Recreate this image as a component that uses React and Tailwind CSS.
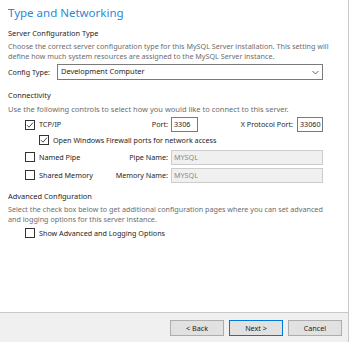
import React from "react";

const font = { fontFamily: '"Noto Sans", "Open Sans", sans-serif' };

function Check({ checked }) {
  return (
    <span className="inline-flex h-[10px] w-[10px] shrink-0 items-center justify-center border border-[#333333] bg-white">
      {checked && (
        <svg width="8" height="8" viewBox="0 0 8 8">
          <path d="M1 4.2 L3 6.2 L7 1.6" fill="none" stroke="#333333" strokeWidth="0.9" />
        </svg>
      )}
    </span>
  );
}

function Field({ value, disabled, className }) {
  return (
    <div
      className={
        "flex h-[15px] shrink-0 items-center border px-[2px] text-[7.2px] " +
        (disabled ? "border-[#cccccc] bg-[#f0f0f0] text-[#8a8a8a] " : "border-[#7a7a7a] bg-white text-[#1e1e1e] ") +
        className
      }
    >
      {value}
    </div>
  );
}

function Button({ label, primary }) {
  return (
    <div
      className={
        "flex h-[16px] w-[54px] items-center justify-center border bg-[#e1e1e1] text-[7.2px] text-[#1e1e1e] " +
        (primary ? "border-[#0078d7]" : "border-[#adadad]")
      }
    >
      {label}
    </div>
  );
}

export default function App() {
  return (
    <div className="flex h-[342px] w-[350px] flex-col overflow-hidden bg-white text-[#1e1e1e]" style={font}>
      <div className="flex w-[349px] flex-1 flex-col border-r border-[#c8c8c8] pl-[8px] pr-[10px]">
        <div className="mt-[4px] h-[18px] text-[11.5px] leading-[18px] text-[#2b88d8]">Type and Networking</div>

        <div className="mt-[6px] text-[7.4px] leading-[10px]">Server Configuration Type</div>
        <div className="mt-[3px] whitespace-nowrap text-[7.2px] leading-[10px] text-[#6d6d6d]">
          Choose the correct server configuration type for this MySQL Server installation. This setting will
          <br />
          define how much system resources are assigned to the MySQL Server instance.
        </div>

        <div className="mt-[3px] flex items-center">
          <span className="w-[49px] text-[7.2px]">Config Type:</span>
          <div className="flex h-[16px] w-[266px] items-center justify-between border border-[#7a7a7a] bg-white pl-[3px] pr-[3px] text-[7.4px]">
            <span>Development Computer</span>
            <svg width="7" height="5" viewBox="0 0 7 5">
              <path d="M0.5 1 L3.5 4 L6.5 1" fill="none" stroke="#555555" strokeWidth="0.9" />
            </svg>
          </div>
        </div>

        <div className="mt-[10px] text-[7.4px] leading-[10px]">Connectivity</div>
        <div className="mt-[4px] whitespace-nowrap text-[7.5px] leading-[10px] text-[#6d6d6d]">
          Use the following controls to select how you would like to connect to this server.
        </div>

        <div className="ml-[17px] mt-[3px] flex items-center whitespace-nowrap text-[7.2px]">
          <Check checked />
          <span className="ml-[4px] w-[100px]">TCP/IP</span>
          <span className="w-[29px] text-right">Port:</span>
          <Field value="3306" className="ml-[3px] w-[27px]" />
          <span className="ml-[25px] w-[70px] text-right">X Protocol Port:</span>
          <Field value="33060" className="ml-[4px] w-[26px]" />
        </div>

        <div className="ml-[31px] mt-[3px] flex items-center whitespace-nowrap text-[7.2px]">
          <Check checked />
          <span className="ml-[4px]">Open Windows Firewall ports for network access</span>
        </div>

        <div className="ml-[17px] mt-[4px] flex items-center whitespace-nowrap text-[7.2px]">
          <Check />
          <span className="ml-[4px] w-[72px]">Named Pipe</span>
          <span className="w-[57px] text-right">Pipe Name:</span>
          <Field value="MYSQL" disabled className="ml-[3px] w-[152px]" />
        </div>

        <div className="ml-[17px] mt-[3px] flex items-center whitespace-nowrap text-[7.2px]">
          <Check />
          <span className="ml-[4px] w-[72px]">Shared Memory</span>
          <span className="w-[57px] text-right">Memory Name:</span>
          <Field value="MYSQL" disabled className="ml-[3px] w-[152px]" />
        </div>

        <div className="mt-[8px] text-[7.4px] leading-[10px]">Advanced Configuration</div>
        <div className="mt-[3px] whitespace-nowrap text-[7.2px] leading-[10px] text-[#6d6d6d]">
          Select the check box below to get additional configuration pages where you can set advanced
          <br />
          and logging options for this server instance.
        </div>

        <div className="ml-[17px] mt-[4px] flex items-center whitespace-nowrap text-[7.2px]">
          <Check />
          <span className="ml-[4px]">Show Advanced and Logging Options</span>
        </div>
      </div>

      <div className="flex h-[30px] w-[349px] items-start justify-end gap-[5px] border-r border-t border-[#c8c8c8] bg-[#f0f0f0] pr-[6px] pt-[7px]">
        <Button label="< Back" />
        <Button label="Next >" primary />
        <Button label="Cancel" />
      </div>
    </div>
  );
}
